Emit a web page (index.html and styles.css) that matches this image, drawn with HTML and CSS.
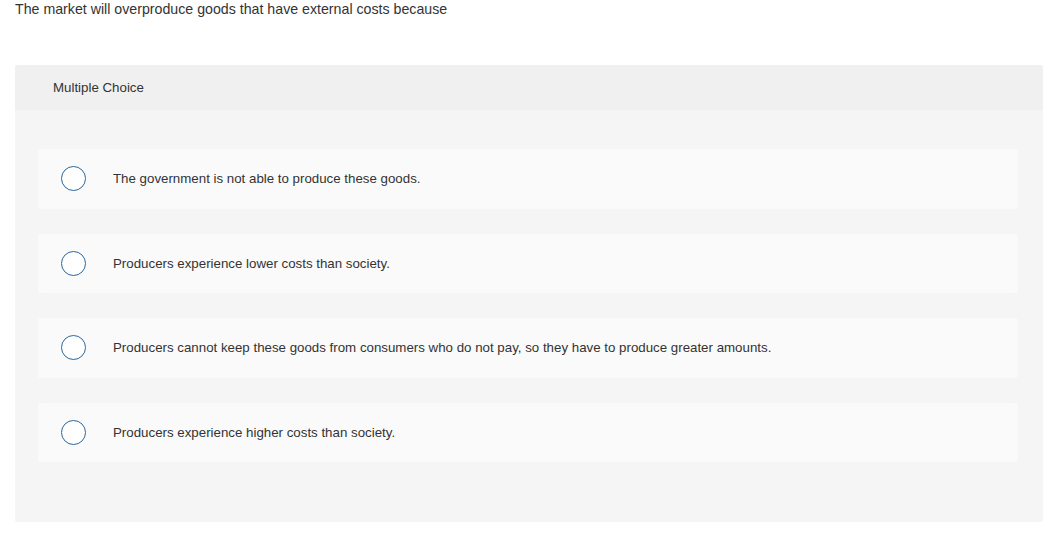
FILE: index.html
```html
<!DOCTYPE html>
<html>
<head>
<meta charset="utf-8">
<link rel="stylesheet" href="styles.css">
</head>
<body>
<p class="question">The market will overproduce goods that have external costs because</p>
<section class="mc">
  <div class="mc-head">Multiple Choice</div>
  <div class="mc-body">
    <div class="opt"><span class="radio"></span><span class="opt-text">The government is not able to produce these goods.</span></div>
    <div class="opt"><span class="radio"></span><span class="opt-text">Producers experience lower costs than society.</span></div>
    <div class="opt"><span class="radio"></span><span class="opt-text">Producers cannot keep these goods from consumers who do not pay, so they have to produce greater amounts.</span></div>
    <div class="opt"><span class="radio"></span><span class="opt-text">Producers experience higher costs than society.</span></div>
  </div>
</section>
</body>
</html>
```
FILE: styles.css
```css
* { box-sizing: border-box; }
body {
  margin: 0;
  background: #fff;
  font-family: "Liberation Sans", Arial, sans-serif;
  color: #333;
}
.question {
  margin: 0;
  padding: 0 15px 0;
  font-size: 14.2px;
  line-height: 19px;
  color: #333;
}
.mc {
  margin: 46px 9px 0 15px;
  border-radius: 2px;
  overflow: hidden;
}
.mc-head {
  background: #f0f0f0;
  height: 45px;
  display: flex;
  align-items: center;
  padding-left: 38px;
  font-size: 13.3px;
  color: #333;
}
.mc-body {
  background: #f5f5f5;
  padding: 39px 25px 60px 23px;
  display: flex;
  flex-direction: column;
  gap: 25px;
}
.opt {
  background: #fafafa;
  border-radius: 3px;
  height: 59.5px;
  display: flex;
  align-items: center;
  padding-left: 23px;
}
.radio {
  width: 25px;
  height: 25px;
  border: 1.6px solid #2a679c;
  border-radius: 50%;
  background: #fff;
  flex: none;
}
.opt-text {
  margin-left: 27px;
  font-size: 13.3px;
  color: #333;
}
```
